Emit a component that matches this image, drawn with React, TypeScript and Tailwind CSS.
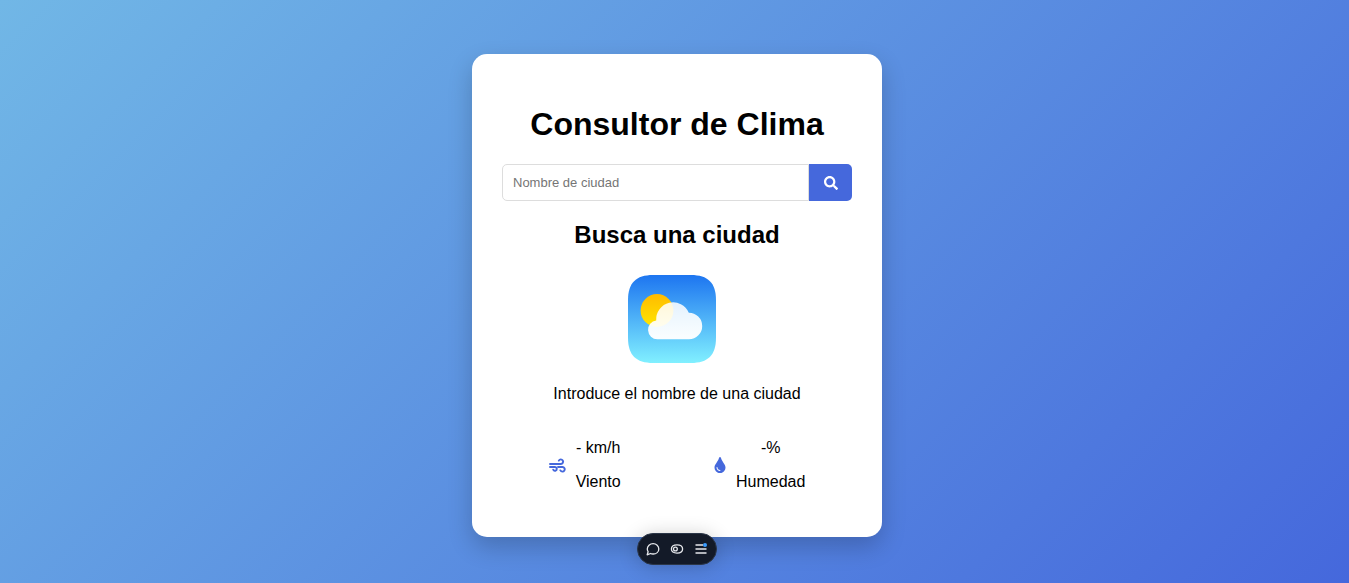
import { FaSearch, FaTint } from "react-icons/fa";

function WeatherIcon() {
  return (
    <svg viewBox="0 0 88 88" className="size-22" role="img" aria-label="Clima">
      <defs>
        <linearGradient id="sky" x1="0" y1="0" x2="0" y2="1">
          <stop offset="0" stopColor="#1d75f0" />
          <stop offset="1" stopColor="#81f0ff" />
        </linearGradient>
        <linearGradient id="sun" x1="0" y1="0" x2="0" y2="1">
          <stop offset="0" stopColor="#ffbb00" />
          <stop offset="1" stopColor="#ffe600" />
        </linearGradient>
        <linearGradient id="cloud" x1="0" y1="0" x2="0" y2="1">
          <stop offset="0" stopColor="#fff" stopOpacity="0.86" />
          <stop offset="1" stopColor="#fff" stopOpacity="0.97" />
        </linearGradient>
      </defs>
      <path
        d="M25 0H63C80 0 88 8 88 25V63C88 80 80 88 63 88H25C8 88 0 80 0 63V25C0 8 8 0 25 0Z"
        fill="url(#sky)"
      />
      <circle cx="29" cy="35.5" r="16.4" fill="url(#sun)" />
      <path
        d="M29.3 64.3A9.5 9.5 0 0 1 28.2 45.4A17 17 0 0 1 60.8 37.7A13.3 13.3 0 0 1 61 64.3Z"
        fill="url(#cloud)"
      />
    </svg>
  );
}

function WindIcon() {
  return (
    <svg
      viewBox="0 0 17 15"
      className="h-[15px] w-[17px] text-[#4568dc]"
      fill="none"
      stroke="currentColor"
      strokeWidth="1.9"
      strokeLinecap="round"
      aria-hidden="true"
    >
      <path d="M1 6H11.900A2.300 2.300 0 1 0 9.800 2.600" />
      <path d="M1 9H6A1.900 1.900 0 1 1 4.200 11.700" />
      <path d="M9 9H13.500A2.300 2.300 0 1 1 11.400 12.400" />
    </svg>
  );
}

function Toolbar() {
  return (
    <div className="fixed inset-x-0 bottom-[18px] flex justify-center pl-[5px]">
      <div className="flex h-8 items-center rounded-full border border-[#2b3648] bg-[#131a28] px-[3px] text-[#e6e8ec] shadow-[0_2px_20px_rgba(0,0,0,0.2)]">
        <button aria-label="Comentarios" className="flex size-6 items-center justify-center">
          <svg viewBox="0 0 16 16" className="size-4" fill="none" stroke="currentColor" strokeWidth="1.3">
            <path
              d="M2.2 13.8L3.1 10.700C2.500 9.800 2.300 8.900 2.300 8C2.300 4.900 4.900 2.700 8.100 2.700S13.800 4.900 13.800 7.900S11.300 13 8.100 13C7.200 13 6.300 12.900 5.500 12.500Z"
              strokeLinejoin="round"
            />
          </svg>
        </button>
        <button aria-label="Vista previa" className="flex size-6 items-center justify-center">
          <svg viewBox="0 0 16 16" className="size-4" fill="none" stroke="currentColor" strokeWidth="1.3">
            <path d="M2.4 8C2.400 5.300 4.500 3.900 8 3.900S13.600 5.300 13.600 8S11.500 12.100 8 12.100S2.400 10.700 2.400 8Z" />
            <circle cx="6.400" cy="8" r="1.900" />
          </svg>
        </button>
        <button aria-label="Menú" className="flex size-6 items-center justify-center">
          <svg viewBox="0 0 16 16" className="size-4" fill="none" stroke="currentColor" strokeWidth="1.3">
            <path d="M2.500 4H10M2.500 8H13.500M2.500 12H13.500" />
            <circle cx="12" cy="4" r="2" fill="#3b9cff" stroke="none" />
          </svg>
        </button>
      </div>
    </div>
  );
}

export default function App() {
  return (
    <div className="flex min-h-screen items-center justify-center bg-linear-[135deg,#71b7e6,#4568dc] pt-2 pl-[5px] font-['Liberation_Sans',Arial,sans-serif] text-base text-black">
      <main className="w-full max-w-[410px] rounded-[15px] bg-white px-[30px] pt-[52px] pb-[46px] text-center shadow-[0_10px_25px_rgba(0,0,0,0.2)]">
        <h1 className="text-[32px] leading-[37px] font-bold">Consultor de Clima</h1>
        <form className="mt-[21px] flex" onSubmit={(e) => e.preventDefault()}>
          <input
            type="text"
            aria-label="Nombre de ciudad"
            placeholder="Nombre de ciudad"
            className="h-[37px] min-w-0 flex-1 rounded-l-[5px] border border-[#ddd] px-[10px] text-[13px] placeholder:text-[#757575]"
          />
          <button
            type="submit"
            aria-label="Buscar"
            className="flex w-[43px] items-center justify-center rounded-r-[5px] bg-[#4568dc] text-sm text-white"
          >
            <FaSearch />
          </button>
        </form>
        <h2 className="mt-5 text-2xl leading-7 font-bold">Busca una ciudad</h2>
        <div className="mt-[26px] flex justify-center pr-[10px]">
          <WeatherIcon />
        </div>
        <p className="mt-[22px] leading-[18px]">Introduce el nombre de una ciudad</p>
        <div className="mt-9 flex justify-around">
          <div className="flex items-center gap-[10px]">
            <WindIcon />
            <div className="leading-[18px]">
              <p>- km/h</p>
              <p className="mt-4">Viento</p>
            </div>
          </div>
          <div className="flex items-center gap-[10px]">
            <FaTint className="h-4 w-3 text-[#4568dc]" />
            <div className="leading-[18px]">
              <p>-%</p>
              <p className="mt-4">Humedad</p>
            </div>
          </div>
        </div>
      </main>
      <Toolbar />
    </div>
  );
}
